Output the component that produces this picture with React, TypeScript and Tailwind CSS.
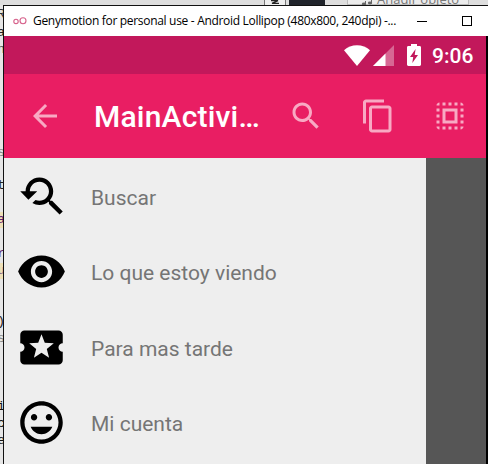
import type { ReactNode } from "react";

const paths = {
  back: "M20 11H7.83l5.59-5.59L12 4l-8 8 8 8 1.41-1.41L7.83 13H20v-2z",
  search:
    "M15.5 14h-.79l-.28-.27C15.41 12.59 16 11.11 16 9.5 16 5.91 13.09 3 9.5 3S3 5.91 3 9.5 5.91 16 9.5 16c1.61 0 3.09-.59 4.23-1.57l.27.28v.79l5 4.99L20.49 19l-4.99-5zm-6 0C7.01 14 5 11.99 5 9.5S7.01 5 9.5 5 14 7.01 14 9.5 11.99 14 9.5 14z",
  copy: "M16 1H4c-1.1 0-2 .9-2 2v14h2V3h12V1zm3 4H8c-1.1 0-2 .9-2 2v14c0 1.1.9 2 2 2h11c1.1 0 2-.9 2-2V7c0-1.1-.9-2-2-2zm0 16H8V7h11v14z",
  selectAll:
    "M3 5h2V3c-1.1 0-2 .9-2 2zm0 8h2v-2H3v2zm4 8h2v-2H7v2zM3 9h2V7H3v2zm10-6h-2v2h2V3zm6 0v2h2c0-1.1-.9-2-2-2zM5 21v-2H3c0 1.1.9 2 2 2zm-2-4h2v-2H3v2zM9 3H7v2h2V3zm2 18h2v-2h-2v2zm8-8h2v-2h-2v2zm0 8c1.1 0 2-.9 2-2h-2v2zm0-12h2V7h-2v2zm0 8h2v-2h-2v2zm-4 4h2v-2h-2v2zm0-16h2V3h-2v2zM7 17h10V7H7v10zm2-8h6v6H9V9z",
  searchedFor:
    "M17.01 14h-.8l-.27-.27c.98-1.14 1.57-2.61 1.57-4.23 0-3.59-2.91-6.5-6.5-6.5s-6.5 3-6.5 6.5H2l3.84 4 4.16-4H6.51C6.51 7 8.53 5 11.01 5s4.5 2.01 4.5 4.5c0 2.48-2.02 4.5-4.5 4.5-.65 0-1.26-.14-1.82-.38L7.71 15.1c.97.57 2.09.9 3.3.9 1.61 0 3.08-.59 4.22-1.57l.27.27v.79l5.01 4.99L22 19l-4.99-5z",
  eye: "M12 4.5C7 4.5 2.73 7.61 1 12c1.73 4.39 6 7.5 11 7.5s9.27-3.11 11-7.5c-1.73-4.39-6-7.5-11-7.5zM12 17c-2.76 0-5-2.24-5-5s2.24-5 5-5 5 2.24 5 5-2.24 5-5 5zm0-8c-1.66 0-3 1.34-3 3s1.34 3 3 3 3-1.34 3-3-1.34-3-3-3z",
  ticket:
    "M20 12c0-1.1.9-2 2-2V6c0-1.1-.9-2-2-2H4c-1.1 0-1.99.9-1.99 2v4c1.1 0 1.99.9 1.99 2s-.89 2-2 2v4c0 1.1.9 2 2 2h16c1.1 0 2-.9 2-2v-4c-1.1 0-2-.9-2-2zm-4.42 4.8L12 14.5l-3.58 2.3 1.08-4.12-3.29-2.69 4.24-.25L12 5.8l1.54 3.95 4.24.25-3.29 2.69 1.09 4.11z",
  face: "M11.99 2C6.47 2 2 6.48 2 12s4.47 10 9.99 10C17.52 22 22 17.52 22 12S17.52 2 11.99 2zM12 20c-4.42 0-8-3.58-8-8s3.58-8 8-8 8 3.58 8 8-3.58 8-8 8zm3.5-9c.83 0 1.5-.67 1.5-1.5S16.33 8 15.5 8 14 8.67 14 9.5s.67 1.5 1.5 1.5zm-7 0c.83 0 1.5-.67 1.5-1.5S9.33 8 8.5 8 7 8.67 7 9.5 7.67 11 8.5 11zm3.5 6.5c2.33 0 4.31-1.46 5.11-3.5H6.89c.8 2.04 2.78 3.5 5.11 3.5z",
};

function Icon({ d, className }: { d: string; className: string }) {
  return (
    <svg viewBox="0 0 24 24" fill="currentColor" className={`shrink-0 ${className}`}>
      <path d={d} />
    </svg>
  );
}

function TitleBar() {
  return (
    <div className="flex h-[30px] items-center bg-white text-black">
      <svg viewBox="0 0 14 8" className="ml-[9px] h-2 w-3.5 shrink-0" fill="none" stroke="#d6608a" strokeWidth="1.1">
        <circle cx="3" cy="4.4" r="2.2" />
        <circle cx="10" cy="3.8" r="3" />
      </svg>
      <span className="ml-[6px] w-[364px] whitespace-nowrap font-['Open_Sans','Noto_Sans',sans-serif] text-[12px] leading-4 tracking-[-0.31px]">
        Genymotion for personal use - Android Lollipop (480x800, 240dpi) -...
      </span>
      <div className="ml-[20px] h-px w-[10px] shrink-0 bg-black" />
      <div className="ml-[35px] size-[10px] shrink-0 border border-black" />
    </div>
  );
}

function StatusBar() {
  return (
    <div className="flex h-[38px] items-center bg-[#c2185b] text-white">
      <svg viewBox="0 0 26 21" className="ml-[340px] h-[21px] w-[26px] shrink-0" fill="currentColor">
        <path d="M0 5.2C3.6 2 8 .2 13 .2S22.400 2 26 5.200L13 21z" />
      </svg>
      <svg viewBox="0 0 21 21" className="ml-[3px] h-[21px] w-[21px] shrink-0" fill="currentColor">
        <path d="M21 0V21H0z" opacity=".35" />
        <path d="M12.500 8.500V21H0z" />
      </svg>
      <svg viewBox="0 0 14 22" className="ml-[13px] h-[22px] w-[14px] shrink-0" fill="currentColor" fillRule="evenodd">
        <path d="M4 0h6v2h2.600c.8 0 1.400.6 1.400 1.400v17.200c0 .8-.6 1.400-1.400 1.400H1.400C.6 22 0 21.400 0 20.600V3.400C0 2.600.6 2 1.400 2H4zM8.600 5L3 13h3.200l-.9 6L11 11H7.700z" />
      </svg>
      <span className="ml-[11px] pt-px font-['Roboto',sans-serif] text-[21px] font-medium leading-6">9:06</span>
    </div>
  );
}

function AppBar() {
  return (
    <div className="flex h-[84px] items-center bg-[#e91e63] text-[#f8a9c3]">
      <Icon d={paths.back} className="ml-[23px] size-9" />
      <h1 className="ml-[31px] w-[167px] whitespace-nowrap pt-[2px] font-['Roboto',sans-serif] text-[30px] font-medium leading-9 tracking-[0.2px] text-white">
        MainActivi…
      </h1>
      <Icon d={paths.search} className="ml-[27px] size-9" />
      <Icon d={paths.copy} className="ml-[36px] size-9" />
      <Icon d={paths.selectAll} className="ml-[36px] size-9" />
    </div>
  );
}

function DrawerItem({ d, children }: { d: string; children: ReactNode }) {
  return (
    <li className="flex h-[75.5px] items-center">
      <Icon d={d} className="ml-[12px] size-[51px] text-black" />
      <span className="ml-[24px] pt-[3px] font-['Roboto',sans-serif] text-[21px] leading-7 text-[#757575]">
        {children}
      </span>
    </li>
  );
}

const fragments = [
  { top: 7, text: "R", color: "text-[#333]" },
  { top: 25, text: "a", color: "text-[#222]" },
  { top: 42, text: "n", color: "text-[#555]" },
  { top: 145, text: "s", color: "text-[#888]" },
  { top: 178, text: "t", color: "text-[#222]" },
  { top: 212, text: "a", color: "text-[#62206f] bg-[#eee0b8]" },
  { top: 246, text: "r", color: "text-[#62206f]" },
  { top: 263, text: "u", color: "text-[#8a6a8a] bg-[#eee0b8]" },
  { top: 314, text: ")", color: "text-[#222]" },
  { top: 331, text: "s", color: "text-[#888]" },
  { top: 399, text: "i", color: "text-[#111]" },
  { top: 416, text: "c", color: "text-[#111]" },
  { top: 433, text: "e", color: "text-[#111]" },
];

export default function App() {
  return (
    <div className="relative h-[464px] w-[488px] overflow-hidden bg-[#e6e6e6]">
      {fragments.map((f) => (
        <span
          key={f.top}
          className={`absolute left-0 flex h-4 w-[3px] justify-end overflow-hidden font-['Liberation_Mono',monospace] text-[13px] leading-4 ${f.color}`}
          style={{ top: f.top }}
        >
          <span className="-mr-[2px]">{f.text}</span>
        </span>
      ))}
      <div className="flex h-[5px] overflow-hidden bg-[#dedede]">
        <div className="ml-[264px] flex w-[22px] justify-center border-x border-[#777] bg-[#eee]">
          <svg viewBox="0 0 8 4" className="h-1 w-2" fill="none" stroke="#222" strokeWidth="1.2">
            <path d="M0 0.600h7L1 3.400h7" />
          </svg>
        </div>
        <div className="ml-[3px] w-[36px] bg-[#20242b]" />
        <div className="ml-[22px] flex w-[122px] border-x border-b border-[#bbb] bg-[#ececec] text-[#777]">
          <svg viewBox="0 0 12 6" className="ml-[13px] h-[6px] w-3 shrink-0" fill="#666">
            <path d="M4 1h1v3.500H4zM10 0h1v3.500h-1z" />
            <ellipse cx="3" cy="4" rx="2.200" ry="1.400" />
            <ellipse cx="9" cy="3" rx="2.200" ry="1.400" />
          </svg>
          <span className="-mt-[9px] ml-[4px] whitespace-nowrap font-['Open_Sans',sans-serif] text-[13px] leading-4">
            Añadir objeto
          </span>
        </div>
      </div>
      <div className="ml-[3px] h-[459px] border-l border-t border-[#111]">
        <TitleBar />
        <div className="h-[428px] border-r-2 border-black">
          <StatusBar />
          <AppBar />
          <div className="flex h-[306px] overflow-hidden bg-[#565656]">
            <ul className="w-[422px] shrink-0 bg-[#eeeeee] pt-[0.5px]">
              <DrawerItem d={paths.searchedFor}>Buscar</DrawerItem>
              <DrawerItem d={paths.eye}>Lo que estoy viendo</DrawerItem>
              <DrawerItem d={paths.ticket}>Para mas tarde</DrawerItem>
              <DrawerItem d={paths.face}>Mi cuenta</DrawerItem>
            </ul>
          </div>
        </div>
      </div>
    </div>
  );
}
